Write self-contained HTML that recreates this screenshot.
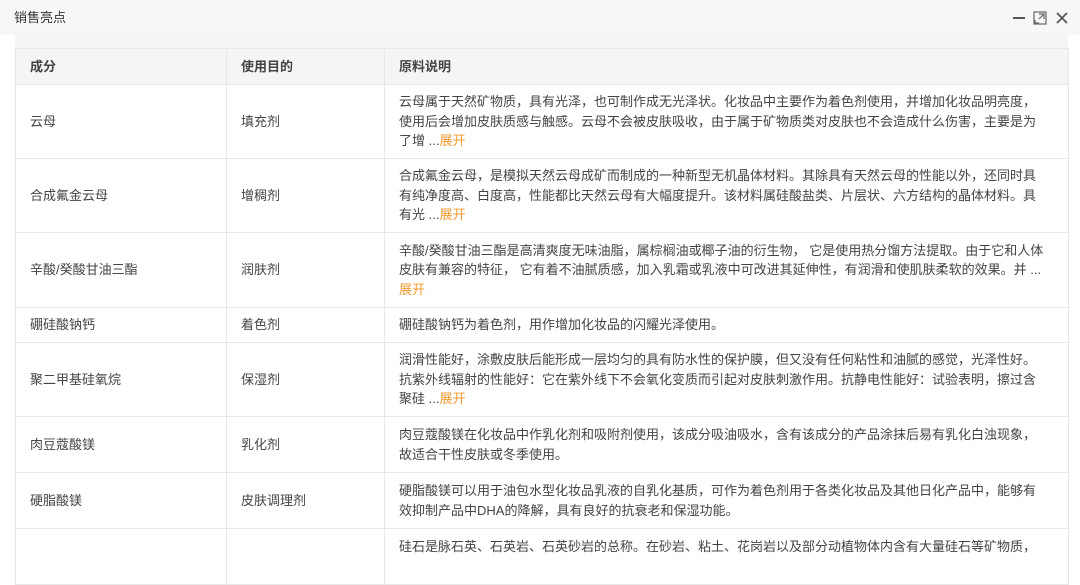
<!DOCTYPE html>
<html><head><meta charset="utf-8"><style>
body{margin:0;width:1080px;height:556px;overflow:hidden;background:#fff;font-family:"Liberation Sans","Noto Sans CJK SC",sans-serif;color:#333;font-size:13px}
.top{height:35px;background:#f7f7f7;position:relative}
.top .t{position:absolute;left:14px;top:7px;font-size:13px;color:#333}
.strip{position:absolute;left:15px;top:35px;width:1053px;height:13px;background:#f3f5f6}
table{position:absolute;left:15px;top:48px;border-collapse:collapse;width:1054px;table-layout:fixed}
td,th{border:1px solid #e6e8ea;padding:0 14px;line-height:19.5px;vertical-align:middle;text-align:left;font-size:13px;color:#444}
td:nth-child(3){padding-right:20px}
th{background:#f3f5f6;height:35px;font-weight:bold;color:#444}
.o{color:#f29a2e}
</style></head><body>
<div class="top"><span class="t">销售亮点</span>
<svg width="60" height="16" viewBox="0 0 60 16" style="position:absolute;right:8px;top:10px"><path d="M1 8h12" stroke="#555" stroke-width="2"/><rect x="22" y="2" width="12" height="12" fill="none" stroke="#666" stroke-width="1.2"/><path d="M27 4h5v5M32 4l-5 5M23 10v3h4" stroke="#666" fill="none" stroke-width="1.2"/><path d="M45 3l10 10M55 3l-10 10" stroke="#555" stroke-width="1.8"/></svg></div>
<div class="strip"></div>
<table>
<colgroup><col style="width:211px"><col style="width:158px"><col></colgroup>
<tr><th>成分</th><th>使用目的</th><th>原料说明</th></tr>
<tr style="height:74px"><td>云母</td><td>填充剂</td><td>云母属于天然矿物质，具有光泽，也可制作成无光泽状。化妆品中主要作为着色剂使用，并增加化妆品明亮度，使用后会增加皮肤质感与触感。云母不会被皮肤吸收，由于属于矿物质类对皮肤也不会造成什么伤害，主要是为了增 ...<span class="o">展开</span></td></tr>
<tr style="height:74px"><td>合成氟金云母</td><td>增稠剂</td><td>合成氟金云母，是模拟天然云母成矿而制成的一种新型无机晶体材料。其除具有天然云母的性能以外，还同时具有纯净度高、白度高，性能都比天然云母有大幅度提升。该材料属硅酸盐类、片层状、六方结构的晶体材料。具有光 ...<span class="o">展开</span></td></tr>
<tr style="height:75px"><td>辛酸/癸酸甘油三酯</td><td>润肤剂</td><td>辛酸/癸酸甘油三酯是高清爽度无味油脂，属棕榈油或椰子油的衍生物， 它是使用热分馏方法提取。由于它和人体皮肤有兼容的特征， 它有着不油腻质感，加入乳霜或乳液中可改进其延伸性，有润滑和使肌肤柔软的效果。并 ...<br><span class="o">展开</span></td></tr>
<tr style="height:35px"><td>硼硅酸钠钙</td><td>着色剂</td><td>硼硅酸钠钙为着色剂，用作增加化妆品的闪耀光泽使用。</td></tr>
<tr style="height:74px"><td>聚二甲基硅氧烷</td><td>保湿剂</td><td>润滑性能好，涂敷皮肤后能形成一层均匀的具有防水性的保护膜，但又没有任何粘性和油腻的感觉，光泽性好。抗紫外线辐射的性能好：它在紫外线下不会氧化变质而引起对皮肤刺激作用。抗静电性能好：试验表明，擦过含聚硅 ...<span class="o">展开</span></td></tr>
<tr style="height:56px"><td>肉豆蔻酸镁</td><td>乳化剂</td><td>肉豆蔻酸镁在化妆品中作乳化剂和吸附剂使用，该成分吸油吸水，含有该成分的产品涂抹后易有乳化白浊现象，故适合干性皮肤或冬季使用。</td></tr>
<tr style="height:56px"><td>硬脂酸镁</td><td>皮肤调理剂</td><td>硬脂酸镁可以用于油包水型化妆品乳液的自乳化基质，可作为着色剂用于各类化妆品及其他日化产品中，能够有效抑制产品中DHA的降解，具有良好的抗衰老和保湿功能。</td></tr>
<tr style="height:56px"><td></td><td></td><td style="vertical-align:top;padding-top:8px">硅石是脉石英、石英岩、石英砂岩的总称。在砂岩、粘土、花岗岩以及部分动植物体内含有大量硅石等矿物质，</td></tr>
</table>
</body></html>
